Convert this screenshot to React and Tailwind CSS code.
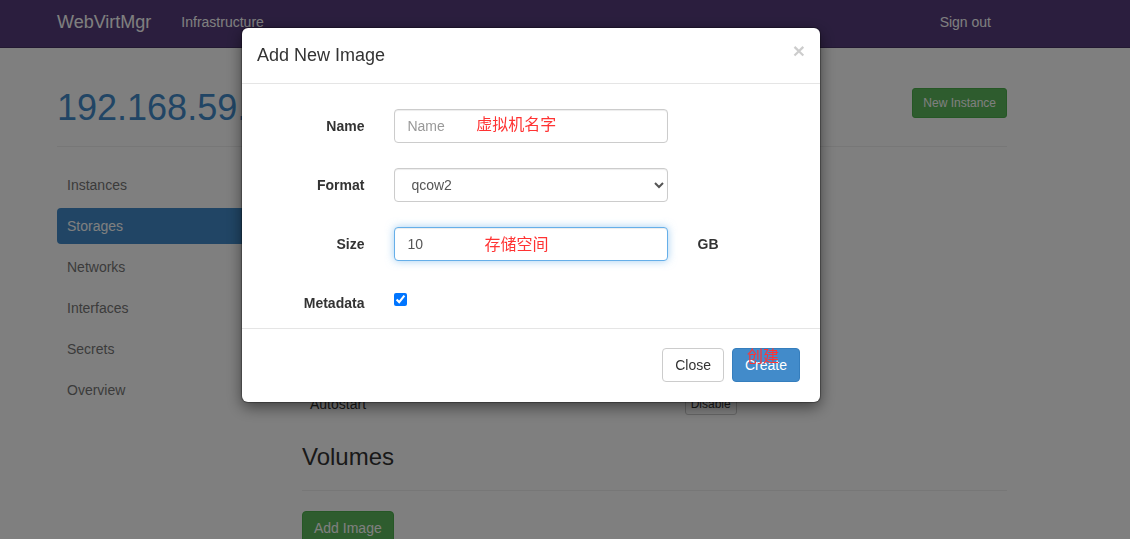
import { useState } from "react";

const navItems = ["Instances", "Storages", "Networks", "Interfaces", "Secrets", "Overview"];

const fieldClass =
    "block h-[34px] w-full rounded border bg-white py-1.5 text-sm text-[#555] outline-none placeholder:text-[#999]";

const Navbar = () => (
    <nav className="h-12 border-b border-[#463265] bg-[#563d7c] pr-[66px] text-white">
        <div className="mx-auto flex h-full max-w-[950px] items-center pb-1">
            <a href="#" className="text-lg">WebVirtMgr</a>
            <a href="#infrastructure" className="ml-[30px] text-sm">Infrastructure</a>
            <a href="#logout" className="mr-4 ml-auto text-sm">Sign out</a>
        </div>
    </nav>
);

const Sidebar = ({ active }) => (
    <ul className="flex flex-col gap-[5px]">
        {navItems.map((item) => (
            <li key={item}>
                <a
                    href={`#${item.toLowerCase()}`}
                    className={`flex h-9 items-center rounded px-2.5 ${item === active ? "bg-[#428bca] text-white" : "text-[#777]"}`}
                >
                    {item}
                </a>
            </li>
        ))}
    </ul>
);

const StoragePage = () => (
    <div className="pr-[66px]">
        <main className="mx-auto max-w-[950px]">
            <header className="flex items-start justify-between border-b border-[#eee] pt-10 pb-[18px]">
                <h1 className="text-4xl leading-10 text-[#428bca]">
                    <a href="#host">192.168.59.</a>
                </h1>
                <button type="button" className="h-[30px] rounded-[3px] border border-[#4cae4c] bg-[#5cb85c] px-2.5 text-xs text-white">
                    New Instance
                </button>
            </header>

            <div className="mt-5 grid grid-cols-[215fr_705fr] gap-[30px]">
                <Sidebar active="Storages" />

                <section className="pt-[222px]">
                    <table className="w-full table-fixed">
                        <tbody>
                            <tr>
                                <th scope="row" className="w-[54%] px-2 py-1 text-left font-normal">Autostart</th>
                                <td className="px-0.5 py-1">
                                    <button type="button" className="block h-[22px] rounded-[3px] border border-[#ccc] bg-white px-[5px] text-xs">
                                        Disable
                                    </button>
                                </td>
                            </tr>
                        </tbody>
                    </table>

                    <h3 className="mt-[22px] text-2xl leading-8">Volumes</h3>
                    <hr className="mt-[17px] border-[#eee]" />
                    <button type="button" className="mt-5 h-[34px] rounded border border-[#4cae4c] bg-[#5cb85c] px-[11px] text-white">
                        Add Image
                    </button>
                </section>
            </div>
        </main>
    </div>
);

const Note = ({ className, children }) => (
    <span
        className={`pointer-events-none absolute text-base leading-5 whitespace-nowrap text-[#ff3333] font-['Noto_Sans_CJK_SC',sans-serif] ${className}`}
    >
        {children}
    </span>
);

const FormRow = ({ label, id, suffix, children }) => (
    <div className="grid grid-cols-[3fr_8fr_3fr] gap-[30px]">
        <label htmlFor={id} className="pt-[7px] text-right font-bold">{label}</label>
        <div className="relative">{children}</div>
        {suffix && <span className="pt-[7px] font-bold">{suffix}</span>}
    </div>
);

const AddImageModal = () => {
    const [name, setName] = useState("");
    const [format, setFormat] = useState("qcow2");
    const [size, setSize] = useState("10");
    const [metadata, setMetadata] = useState(true);

    return (
        <div className="fixed inset-0 overflow-hidden bg-black/50 pt-7 pr-[68px]">
            <div
                role="dialog"
                aria-modal="true"
                aria-labelledby="modal-title"
                className="mx-auto max-w-[578px] rounded-md bg-white shadow-[0_5px_15px_rgba(0,0,0,0.5),0_0_1px_1px_rgba(0,0,0,0.3)]"
            >
                <div className="flex items-start justify-between border-b border-[#e5e5e5] p-[15px]">
                    <h4 id="modal-title" className="text-lg leading-[25px]">Add New Image</h4>
                    <button type="button" aria-label="Close dialog" className="text-[21px] leading-4 font-bold text-black/20">
                        ×
                    </button>
                </div>

                <form id="image-form" className="flex flex-col gap-[25px] px-5 pt-[25px]">
                    <FormRow label="Name" id="name">
                        <input
                            id="name"
                            type="text"
                            placeholder="Name"
                            value={name}
                            onChange={(e) => setName(e.target.value)}
                            className={`${fieldClass} border-[#ccc] px-3 shadow-[inset_0_1px_1px_rgba(0,0,0,0.075)]`}
                        />
                        <Note className="top-1 left-[30%]">虚拟机名字</Note>
                    </FormRow>
                    <FormRow label="Format" id="format">
                        <select
                            id="format"
                            value={format}
                            onChange={(e) => setFormat(e.target.value)}
                            className={`${fieldClass} border-[#ccc] pl-3 shadow-[inset_0_1px_1px_rgba(0,0,0,0.075)]`}
                        >
                            <option>qcow2</option>
                        </select>
                    </FormRow>
                    <FormRow label="Size" id="size" suffix="GB">
                        <input
                            id="size"
                            type="text"
                            value={size}
                            onChange={(e) => setSize(e.target.value)}
                            className={`${fieldClass} border-[#66afe9] px-3 shadow-[inset_0_1px_1px_rgba(0,0,0,0.075),0_0_8px_rgba(102,175,233,0.6)]`}
                        />
                        <Note className="top-1.5 left-[33%]">存储空间</Note>
                    </FormRow>
                    <FormRow label="Metadata" id="metadata">
                        <input
                            id="metadata"
                            type="checkbox"
                            checked={metadata}
                            onChange={(e) => setMetadata(e.target.checked)}
                            className="mt-[7px] block size-[13px]"
                        />
                    </FormRow>
                </form>

                <div className="mt-[15px] flex justify-end gap-2 border-t border-[#e5e5e5] px-5 pt-[19px] pb-5">
                    <button type="button" className="h-[34px] rounded border border-[#ccc] bg-white px-3">Close</button>
                    <button type="submit" form="image-form" className="relative h-[34px] rounded border border-[#357ebd] bg-[#428bca] px-3 text-white">
                        Create
                        <Note className="-top-1 left-3.5">创建</Note>
                    </button>
                </div>
            </div>
        </div>
    );
};

export default function App() {
    return (
        <div className="h-screen overflow-hidden bg-white font-['Liberation_Sans','Noto_Sans_CJK_SC',sans-serif] text-sm text-[#333]">
            <Navbar />
            <StoragePage />
            <AddImageModal />
        </div>
    );
}
